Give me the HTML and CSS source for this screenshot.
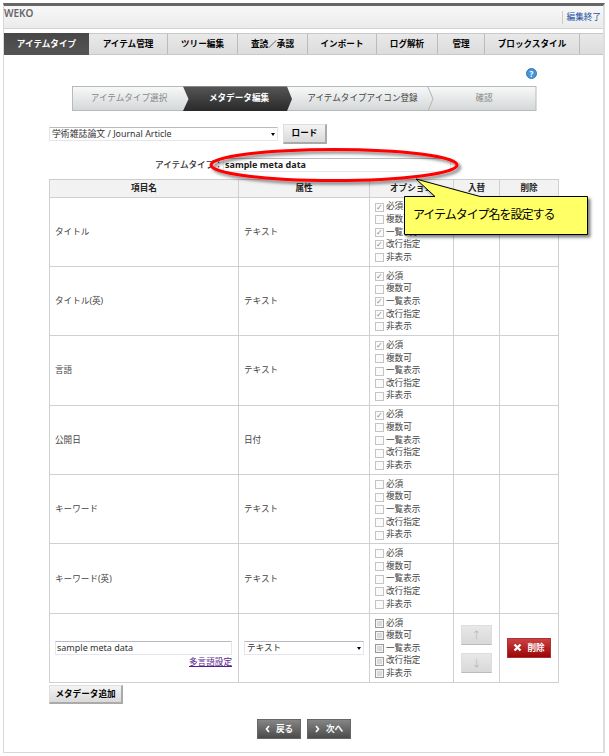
FILE: index.html
```html
<!DOCTYPE html>
<html lang="ja">
<head>
<meta charset="utf-8">
<title>WEKO</title>
<link rel="stylesheet" href="styles.css">
</head>
<body>
<div class="frame">
  <header class="top"><span class="brand">WEKO</span><a class="exit">編集終了</a></header>
  <nav class="tabs">
    <a class="tab active">アイテムタイプ</a><a class="tab">アイテム管理</a><a class="tab">ツリー編集</a><a class="tab">査読／承認</a><a class="tab">インポート</a><a class="tab">ログ解析</a><a class="tab">管理</a><a class="tab">ブロックスタイル</a><span class="tab"></span>
  </nav>
  <main class="content">
    <div class="help-row"><span class="help">?</span></div>
    <div class="steps">
      <svg class="steps-bg" width="465" height="26" viewBox="0 0 465 26">
        <defs>
          <linearGradient id="light" x1="0" y1="0" x2="0" y2="1"><stop offset="0" stop-color="#f8f9f9"/><stop offset="1" stop-color="#d4d7d8"/></linearGradient>
          <linearGradient id="dark" x1="0" y1="0" x2="0" y2="1"><stop offset="0" stop-color="#565656"/><stop offset="1" stop-color="#292929"/></linearGradient>
        </defs>
        <rect x=".5" y=".5" width="463.500" height="24" fill="url(#light)" stroke="#b7b9ba"/>
        <path d="M111 .5H215L220 13L215 25H111L116.500 13Z" fill="url(#dark)"/>
        <path d="M356 1L361 13L356 25" fill="none" stroke="#b2b4b5"/>
      </svg>
      <span class="step muted">アイテムタイプ選択</span><span class="step current">メタデータ編集</span><span class="step">アイテムタイプアイコン登録</span><span class="step muted">確認</span>
    </div>
    <div class="load-row"><div class="field select load-select">学術雑誌論文 / Journal Article</div><button class="btn load">ロード</button></div>
    <div class="name-row"><span class="name-label">アイテムタイプ：</span><div class="field name-input">sample meta data</div></div>
    <div class="table">
      <div class="row head"><div>項目名</div><div>属性</div><div>オプション</div><div>入替</div><div>削除</div></div>
      <div class="row"><div>タイトル</div><div>テキスト</div><div class="opts"><label class="on">必須</label><label>複数可</label><label class="on">一覧表示</label><label class="on">改行指定</label><label>非表示</label></div><div></div><div></div></div>
      <div class="row"><div>タイトル(英)</div><div>テキスト</div><div class="opts"><label class="on">必須</label><label>複数可</label><label class="on">一覧表示</label><label class="on">改行指定</label><label>非表示</label></div><div></div><div></div></div>
      <div class="row"><div>言語</div><div>テキスト</div><div class="opts"><label class="on">必須</label><label>複数可</label><label>一覧表示</label><label>改行指定</label><label>非表示</label></div><div></div><div></div></div>
      <div class="row"><div>公開日</div><div>日付</div><div class="opts"><label class="on">必須</label><label>複数可</label><label>一覧表示</label><label>改行指定</label><label>非表示</label></div><div></div><div></div></div>
      <div class="row"><div>キーワード</div><div>テキスト</div><div class="opts"><label>必須</label><label>複数可</label><label>一覧表示</label><label>改行指定</label><label>非表示</label></div><div></div><div></div></div>
      <div class="row"><div>キーワード(英)</div><div>テキスト</div><div class="opts"><label>必須</label><label>複数可</label><label>一覧表示</label><label>改行指定</label><label>非表示</label></div><div></div><div></div></div>
      <div class="row">
        <div class="edit"><div class="field meta-input">sample meta data</div><a class="lang">多言語設定</a></div>
        <div class="type"><div class="field select type-select">テキスト</div></div>
        <div class="opts enabled"><label>必須</label><label>複数可</label><label>一覧表示</label><label>改行指定</label><label>非表示</label></div>
        <div class="move"><span>↑</span><span>↓</span></div>
        <div class="del"><button class="delete"><svg width="9" height="9" viewBox="0 0 9 9"><path d="M1.500 1.500L7.500 7.500M7.500 1.500L1.500 7.500" stroke="#fff" stroke-width="2.300"/></svg>削除</button></div>
      </div>
    </div>
    <button class="btn add">メタデータ追加</button>
    <div class="pager">
      <button class="page"><svg width="5" height="8" viewBox="0 0 5 8"><path d="M4 1L1.500 4L4 7" fill="none" stroke="#fff" stroke-width="1.600"/></svg>戻る</button>
      <button class="page"><svg width="5" height="8" viewBox="0 0 5 8"><path d="M1 1L3.500 4L1 7" fill="none" stroke="#fff" stroke-width="1.600"/></svg>次へ</button>
    </div>
  </main>
</div>
<svg class="annotation" width="609" height="756" viewBox="0 0 609 756">
  <defs><filter id="shadow" x="-10%" y="-20%" width="130%" height="160%"><feDropShadow dx="2.500" dy="2.500" stdDeviation="1.500" flood-color="#000" flood-opacity=".5"/></filter></defs>
  <ellipse cx="334" cy="165" rx="123" ry="15.500" fill="none" stroke="#f00" stroke-width="3" filter="url(#shadow)"/>
  <path d="M404.500 196.500H435L416 179L480 196.500H587.500V234.500H404.500Z" fill="#ff6" stroke="#000" filter="url(#shadow)"/>
</svg>
<div class="note">アイテムタイプ名を設定する</div>
</body>
</html>
```
FILE: styles.css
```css
*, *::before, *::after { box-sizing: border-box; }
body {
  margin: 0;
  padding: 3px 4px 0 3px;
  width: 609px;
  height: 756px;
  overflow: hidden;
  background: #fff;
  color: #444;
  font: 8.6px/12px "Noto Sans", "Noto Sans CJK JP", sans-serif;
  white-space: nowrap;
}
button { font: inherit; margin: 0; padding: 0; }
.frame { height: 750px; border: 1px solid #d8d8d8; border-top: 3px solid #666; border-right: 2px solid #ddd; }
.top {
  display: flex;
  justify-content: space-between;
  height: 23px;
  border-bottom: 1px solid #d2d2d2;
  background: linear-gradient(#f8f8f8, #ebebeb);
}
.brand { font-weight: 600; font-size: 10px; line-height: 15px; color: #666; }
.exit { height: 13px; margin: 5px 2px 0 0; padding-left: 4px; border-left: 1px solid #ccc; line-height: 13px; color: #2450a4; }
.tabs {
  display: grid;
  grid-template-columns: 85px 79px 70px 70px 69px 61px 47px 95px 1fr;
  height: 22px;
  margin-top: 4px;
  border-top: 1px solid #c9c9c9;
  border-bottom: 1px solid #c9c9c9;
  background: linear-gradient(#e9e9e9, #dcdcdc);
}
.tab { border-right: 1px solid #bbb; text-align: center; font-weight: bold; line-height: 20px; color: #000; }
.tab:last-child { border: 0; }
.tab.active { margin: -1px 0; line-height: 22px; border: 0; background: linear-gradient(#474747, #555); color: #fff; }
.content { padding-left: 45px; }
.help-row { height: 31px; padding: 13px 0 0 477px; }
.help { display: block; width: 11px; height: 11px; border: 1px solid #3479bb; border-radius: 50%; background: #4795d6; color: #fff; text-align: center; font-weight: bold; font-size: 8px; line-height: 9px; }
.steps { position: relative; display: grid; grid-template-columns: 114px 106px 141px 102px; width: 465px; height: 26px; margin-left: 23px; }
.steps-bg { position: absolute; left: 0; top: 0; }
.step { position: relative; text-align: center; line-height: 25px; }
.muted { color: #888; }
.current { color: #fff; font-weight: bold; }
.load-row { display: flex; align-items: center; gap: 5px; height: 21px; margin-top: 11px; }
.field { height: 14px; border: 1px solid #e3e7ed; border-top-color: #b8babf; border-radius: 1px; background: #fff; padding-left: 1px; line-height: 12px; color: #333; }
.select { position: relative; padding-left: 2px; }
.select::after { content: ""; position: absolute; right: 2px; top: 5px; border: 2.5px solid transparent; border-top: 3px solid #000; border-bottom: 0; }
.load-select { width: 229px; font-size: 8.9px; }
.btn { border: 1px solid #ddd; border-right: 2px solid #aaa; border-bottom: 2px solid #aaa; background: linear-gradient(#f4f4f4, #d9d9d9); color: #000; font-weight: bold; text-align: center; }
.load { width: 44px; height: 20px; }
.name-row { display: flex; height: 14px; margin-top: 14px; padding-left: 106px; font-weight: bold; color: #333; }
.name-label { width: 68px; font-weight: 500; line-height: 14px; }
.name-input { width: 228px; color: #222; font-size: 9px; }
.table { display: grid; grid-template-rows: 17.6px repeat(7, 69.36px); width: 510px; margin-top: 7px; border-top: 1px solid #ccc; border-left: 1px solid #d0d0d0; }
.row { display: grid; grid-template-columns: 189px 131px 84px 46px 59px; }
.row > div { display: flex; align-items: center; padding-left: 5px; border-right: 1px solid #d0d0d0; border-bottom: 1px solid #d0d0d0; }
.row.head > div { justify-content: center; padding: 0; background: #f2f2f2; color: #222; font-weight: bold; }
.row > .opts { flex-direction: column; align-items: flex-start; padding: 2.8px 0 0 5px; }
.opts label { display: flex; align-items: center; height: 12.6px; line-height: 12.6px; }
.opts label::before { content: ""; flex: none; width: 9px; height: 9px; margin: 1px 2px 0 0; border: 1px solid #c4c4c4; background: #fbfbfb; color: #888; font: 8px/7px "DejaVu Sans"; }
.opts .on::before { content: "✓"; }
.opts.enabled label::before { border-color: #999; background: #d8dbde; box-shadow: inset 0 0 0 1px #f4f4f4; }
.row > .edit { flex-direction: column; align-items: flex-start; padding-top: 27px; }
.meta-input { width: 177px; font-size: 9px; }
.lang { align-self: flex-end; margin-right: 6px; line-height: 14px; color: #551a8b; text-decoration: underline; }
.type-select { width: 120px; }
.row > .move { flex-direction: column; padding: 11px 0 0; gap: 8px; }
.move span { width: 31px; height: 20px; border: 1px solid #ddd; border-bottom-color: #bbb; background: linear-gradient(#e8e8e8, #d8d8d8); color: #bbb; text-align: center; font-size: 10px; line-height: 18px; }
.row > .del { justify-content: center; padding: 0; }
.delete { display: flex; align-items: center; justify-content: center; gap: 5px; width: 44px; height: 20px; border: 1px solid #a33; background: linear-gradient(#cd4141, #9b0508); color: #fff; font-weight: bold; }
.add { display: block; width: 74px; height: 19px; margin-top: 2px; }
.pager { display: flex; gap: 6px; margin: 14.5px 0 0 208px; }
.page { display: flex; align-items: center; justify-content: center; gap: 6px; width: 44px; height: 20px; border: 1px solid #666; background: linear-gradient(#858585, #4b4b4b); color: #fff; font-weight: bold; }
.annotation { position: absolute; left: 0; top: 0; pointer-events: none; }
.note { position: absolute; left: 413px; top: 206px; color: #000; font: 12px/16px "Noto Sans CJK JP", sans-serif; letter-spacing: -1.03px; }
```
